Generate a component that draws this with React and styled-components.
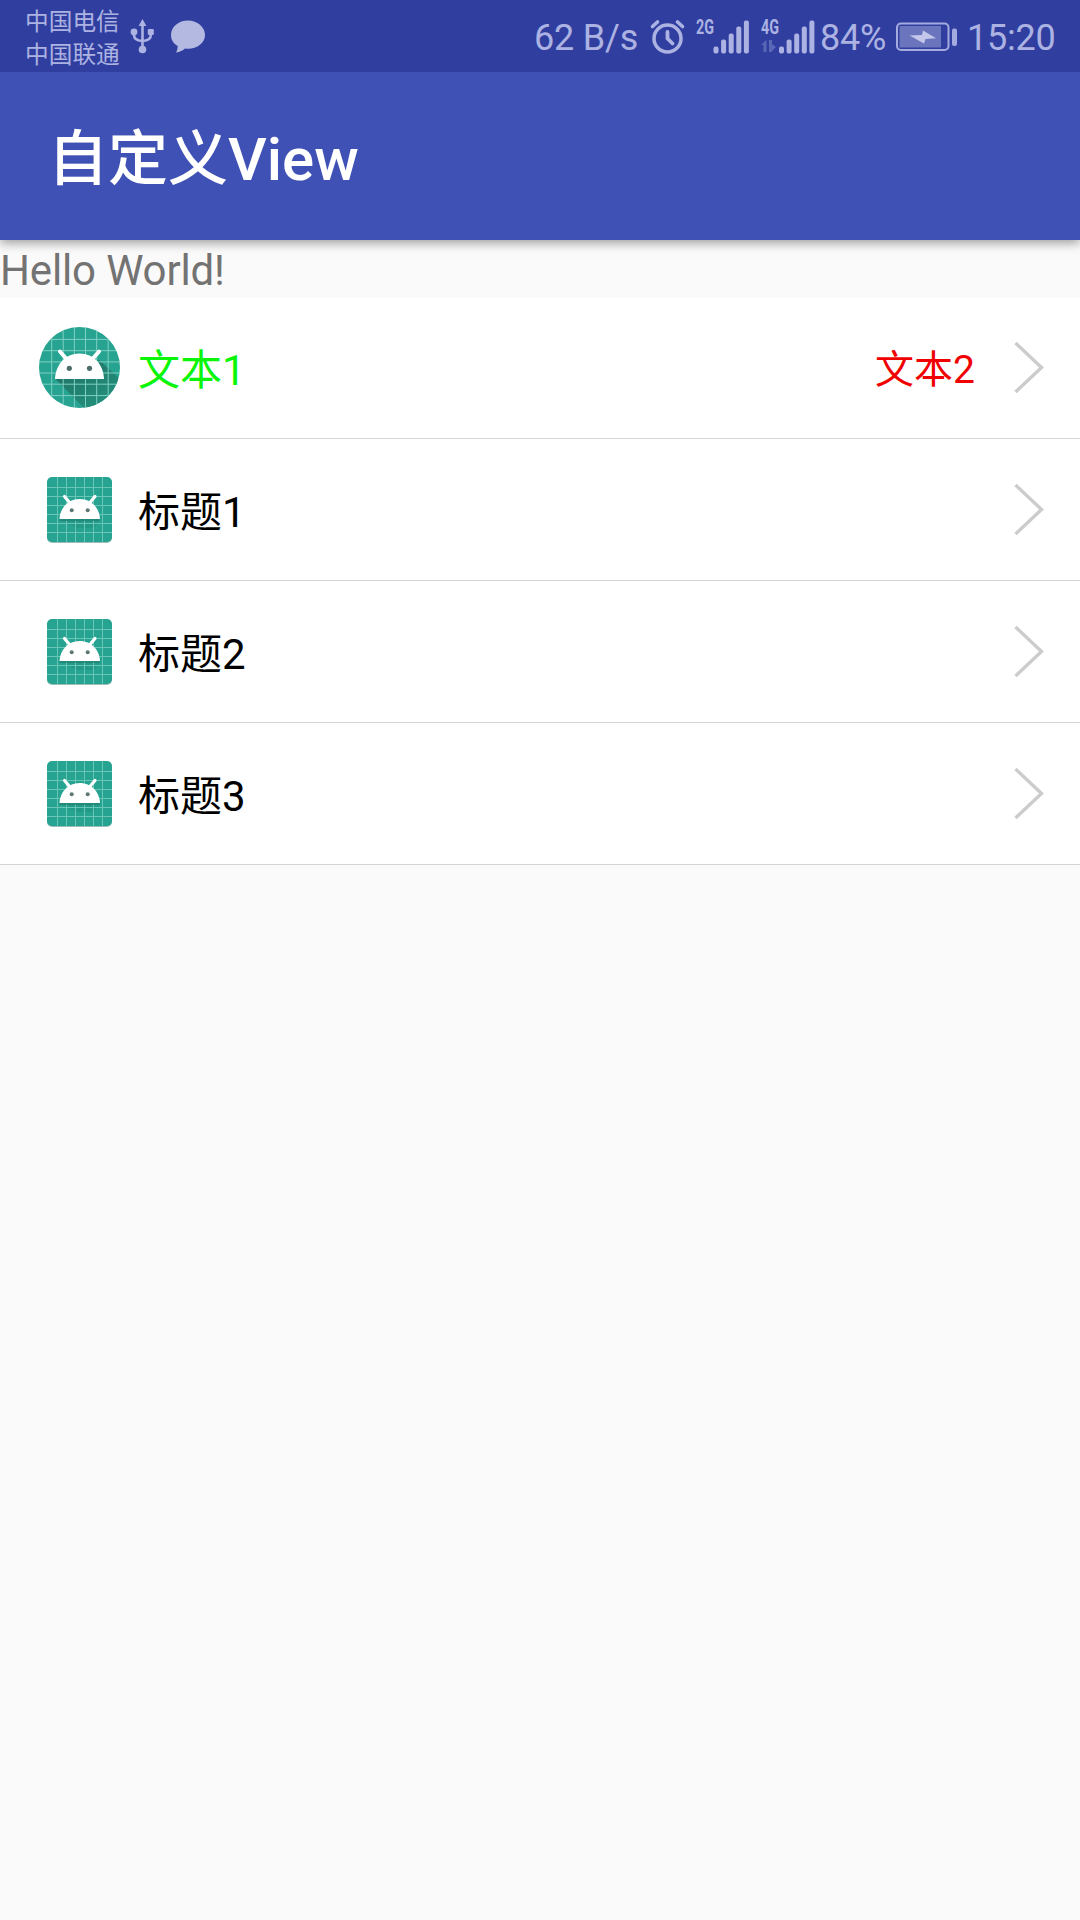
import React from "react";
import styled, { createGlobalStyle } from "styled-components";

const Global = createGlobalStyle`
  *, *::before, *::after { box-sizing: border-box; }
  html, body { margin: 0; padding: 0; background: #fafafa; }
  svg { display: block; flex: none; overflow: visible; }
`;

const Screen = styled.div`
  width: 1080px;
  min-height: 1920px;
  display: flex;
  flex-direction: column;
  background: #fafafa;
  font-family: Roboto, "Noto Sans CJK SC", sans-serif;
`;

const StatusBar = styled.header`
  height: 72px;
  display: flex;
  align-items: center;
  justify-content: space-between;
  padding: 0 23px 0 25px;
  background: #303f9f;
  color: #acb2e2;
  z-index: 2;
`;

const StatusGroup = styled.div`
  display: flex;
  align-items: center;
`;

const Carriers = styled.div`
  display: flex;
  flex-direction: column;
  width: 96px;
  margin-right: 9px;
  padding-top: 5px;
  font-size: 23.7px;
  line-height: 33px;
  white-space: nowrap;
`;

const StatusText = styled.span`
  width: ${(p) => p.$width}px;
  margin-right: ${(p) => p.$gap || 0}px;
  padding-top: 4px;
  font-size: 36px;
  line-height: 42px;
  letter-spacing: -0.2px;
  white-space: nowrap;
`;

const StatusIcon = styled.svg`
  margin-right: ${(p) => p.$gap || 0}px;
`;

const AppBar = styled.div`
  height: 168px;
  display: flex;
  align-items: center;
  padding: 7px 0 0 48px;
  background: #3f51b5;
  box-shadow: 0 3px 10px rgba(0, 0, 0, 0.38);
  z-index: 1;
`;

const Title = styled.h1`
  margin: 0;
  color: #fff;
  font-size: 60px;
  font-weight: 500;
  line-height: 70px;
`;

const Greeting = styled.p`
  height: 58px;
  margin: 0;
  padding-top: 6px;
  color: #737373;
  font-size: 42px;
  line-height: 49px;
  letter-spacing: -0.15px;
`;

const List = styled.ul`
  margin: 0;
  padding: 0;
  list-style: none;
`;

const Row = styled.li`
  height: 142px;
  display: flex;
  align-items: center;
  padding: 0 36px 0 38px;
  background: #fff;
  border-bottom: 1px solid #d4d4d4;

  &:first-child {
    height: 141px;
    padding-bottom: 1px;
  }
`;

const IconSlot = styled.div`
  width: 83px;
  display: flex;
  justify-content: center;
  margin-right: 17px;
`;

const Label = styled.span`
  flex: 1;
  padding-top: 6px;
  color: ${(p) => p.$color || "#000"};
  font-size: 42px;
  line-height: 50px;
`;

const Value = styled.span`
  padding-top: 5px;
  margin-right: 39px;
  color: #f00000;
  font-size: 39px;
  line-height: 46px;
`;

const UsbIcon = () => (
  <StatusIcon $gap={16} width="24" height="36" viewBox="0 0 24 36" fill="none" stroke="currentColor" strokeWidth="2.6">
    <path d="M12.500 6V30M4 14v3q0 5.500 8 6M20.800 14v3q0 5.500-8 6" />
    <path d="M12.500 1 8.600 8h7.800z" fill="currentColor" stroke="none" />
    <circle cx="12.500" cy="31.500" r="3.800" fill="currentColor" stroke="none" />
    <circle cx="4" cy="14" r="3.400" fill="currentColor" stroke="none" />
    <rect x="17.800" y="11" width="6" height="6" rx="1.200" fill="currentColor" stroke="none" />
  </StatusIcon>
);

const ChatIcon = () => (
  <svg width="36" height="34" viewBox="0 0 36 34" fill="#b4b9e1">
    <path d="M18 1.500C8.600 1.500 1 7.700 1 16c0 5 2.500 8.600 6.700 11.100 0 2.500-.5 4.500-1.700 6.400 4-.6 6.800-2 9-4 1 .2 2 .2 3 .2 9.400 0 17-5.700 17-13.700S27.400 1.500 18 1.500z" />
  </svg>
);

const AlarmIcon = () => (
  <StatusIcon $gap={9} width="37" height="36" viewBox="0 0 37 36" fill="none" stroke="currentColor" strokeLinecap="round">
    <circle cx="18.500" cy="20.500" r="13.500" strokeWidth="3.500" />
    <path d="M18.500 14v6.500l5 5" strokeWidth="3.800" strokeLinejoin="round" />
    <path d="M3.500 8.500 8.500 4M33.500 8.500l-5-4.500" strokeWidth="3.600" />
  </StatusIcon>
);

const bars = [7, 14, 20, 27, 33];

const Signal = ({ label, gap, offset, data }) => (
  <StatusIcon $gap={gap} width="57" height="36" viewBox="0 0 57 36" fill="currentColor">
    <text
      x="1" y="16" fontSize="20" fontWeight="700" fontFamily="Roboto, sans-serif"
      textLength="18" lengthAdjust="spacingAndGlyphs"
    >
      {label}
    </text>
    {data && (
      <g fill="#5a66b6">
        <path d="M6.500 22v12H3.500V27H1z" />
        <path d="M9 22h3v4l4 3-4 4v1H9z" />
      </g>
    )}
    {bars.map((h, i) => (
      <rect key={h} x={offset + i * 7.6} y={35.5 - h} width="5" height={h} rx="2" />
    ))}
  </StatusIcon>
);

const BatteryIcon = () => (
  <StatusIcon $gap={9} width="63" height="30" viewBox="0 0 63 30">
    <rect x="2" y="2.500" width="51.500" height="26.500" rx="4" fill="none" stroke="#a3abdf" strokeWidth="2" />
    <rect x="4.500" y="5" width="41.500" height="21.500" fill="#6a75be" />
    <rect x="57" y="7.500" width="5" height="17.500" rx="2" fill="#a3abdf" />
    <path d="M14.500 14.500 27 14l1-4.500L41 17.200 30.500 18l-1.500 4.500z" fill="#c3c8ea" />
  </StatusIcon>
);

const teal = "#26a391";

const RoundLauncher = () => (
  <svg width="81" height="81" viewBox="0 0 81 81">
    <clipPath id="round"><circle cx="40.500" cy="40.500" r="40.500" /></clipPath>
    <linearGradient id="cast" x1="0.200" y1="0.200" x2="0.800" y2="1">
      <stop offset="0" stopColor="#207567" />
      <stop offset="1" stopColor="#24937f" />
    </linearGradient>
    <g clipPath="url(#round)">
      <rect width="81" height="81" fill={teal} />
      <path d="M16.500 52 45 81H81V52L60 33z" fill="url(#cast)" />
      <path
        d="M12.700 0V81M24.200 0V81M35.400 0V81M46.500 0V81M57.700 0V81M69.200 0V81M0 12.400H81M0 23.700H81M0 34.900H81M0 46H81M0 57.200H81M0 68.600H81"
        stroke="#7fd0c3" strokeWidth="1"
      />
    </g>
    <path d="M16 52C16.500 38 26 26.500 40.500 26.500S64.500 38 65 52z" fill="#fff" />
    <path d="M21 24.500 27.500 32M60 24.500 53.500 32" stroke="#fff" strokeWidth="4" strokeLinecap="round" />
    <circle cx="30.300" cy="41.300" r="2.600" fill="#4d6d6b" />
    <circle cx="50.500" cy="41.300" r="2.600" fill="#4d6d6b" />
  </svg>
);

const SquareLauncher = () => (
  <svg width="65" height="66" viewBox="0 0 65 66">
    <rect y="1" width="65" height="65" rx="5" fill="#9dbdb9" />
    <rect width="65" height="65" rx="5" fill={teal} />
    <path d="M13 43H53L47 51H30z" fill="#239a88" />
    <path
      d="M10.500 0V65M19.500 0V65M28.500 0V65M37.500 0V65M46.500 0V65M55.500 0V65M0 10.500H65M0 19.500H65M0 28.500H65M0 37.500H65M0 46.500H65M0 55.500H65"
      stroke="#69c5b6" strokeWidth="1"
    />
    <path d="M12.500 43H53" stroke="#238274" strokeWidth="1.500" />
    <path d="M12.500 42C13 31 21 22 32.700 22S52.500 31 53 42z" fill="#fff" />
    <path d="M17.500 19.500 23 26M48 19.500 42.500 26" stroke="#fff" strokeWidth="3.200" strokeLinecap="round" />
    <circle cx="24.700" cy="33.300" r="2" fill="#5c7775" />
    <circle cx="40.700" cy="33.300" r="2" fill="#5c7775" />
  </svg>
);

const Chevron = () => (
  <svg width="30" height="52" viewBox="0 0 30 52" fill="none" stroke="#cccccc" strokeWidth="3.400">
    <path d="M1.500 1 27.500 25.500 1.500 50" />
  </svg>
);

const items = [
  { label: "文本1", color: "#0af50a", value: "文本2", round: true },
  { label: "标题1" },
  { label: "标题2" },
  { label: "标题3" },
];

export default function App() {
  return (
    <Screen>
      <Global />
      <StatusBar>
        <StatusGroup>
          <Carriers>
            <span>中国电信</span>
            <span>中国联通</span>
          </Carriers>
          <UsbIcon />
          <ChatIcon />
        </StatusGroup>
        <StatusGroup>
          <StatusText $width={105} $gap={10}>62 B/s</StatusText>
          <AlarmIcon />
          <Signal label="2G" offset={18.5} gap={8} />
          <Signal label="4G" offset={19} gap={3} data />
          <StatusText $width={67} $gap={8}>84%</StatusText>
          <BatteryIcon />
          <StatusText $width={90}>15:20</StatusText>
        </StatusGroup>
      </StatusBar>
      <AppBar>
        <Title>自定义View</Title>
      </AppBar>
      <Greeting>Hello World!</Greeting>
      <List>
        {items.map((item) => (
          <Row key={item.label}>
            <IconSlot>{item.round ? <RoundLauncher /> : <SquareLauncher />}</IconSlot>
            <Label $color={item.color}>{item.label}</Label>
            {item.value && <Value>{item.value}</Value>}
            <Chevron />
          </Row>
        ))}
      </List>
    </Screen>
  );
}
